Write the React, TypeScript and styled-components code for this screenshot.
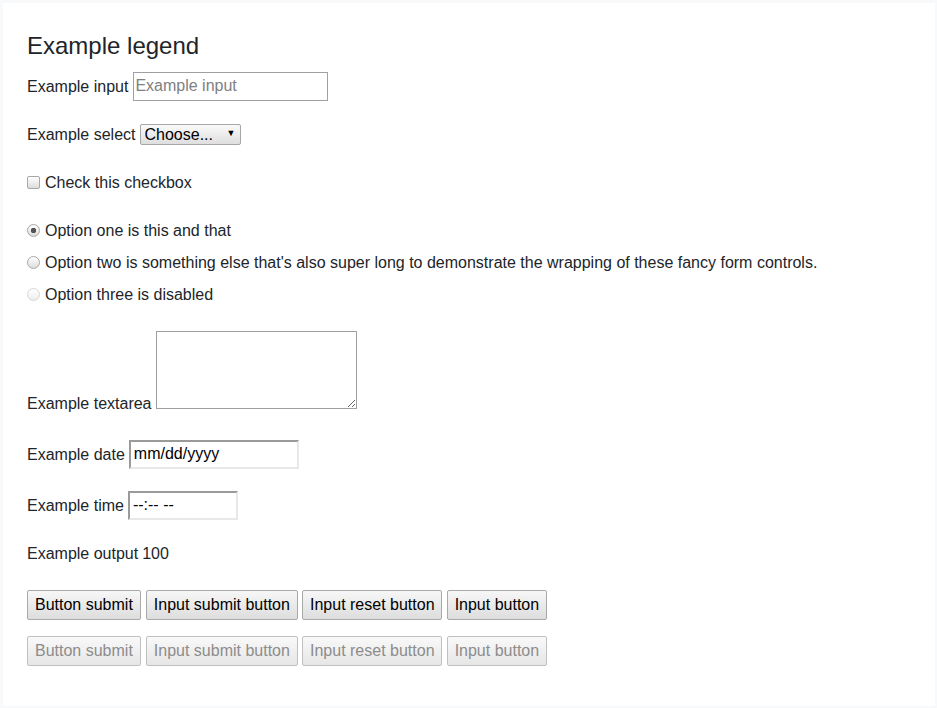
import React from "react";
import styled, { createGlobalStyle } from "styled-components";

const GlobalStyle = createGlobalStyle`
  html, body {
    margin: 0;
    padding: 0;
    background: #f8f9fa;
  }
  body {
    font-family: "Liberation Sans", Arial, sans-serif;
    font-size: 16px;
    color: #212529;
  }
  * {
    box-sizing: border-box;
  }
`;

export default function App() {
  return (
    <>
      <GlobalStyle />
      <StPage>
        <StCard>
          <StLegend>Example legend</StLegend>

          <StRow $mt={9}>
            <StLabel htmlFor="exampleInput">Example input</StLabel>
            <StTextInput id="exampleInput" placeholder="Example input" />
          </StRow>

          <StRow $mt={16}>
            <StLabel htmlFor="exampleSelect">Example select</StLabel>
            <StSelectWrap>
              <StSelect id="exampleSelect" defaultValue="">
                <option value="">Choose...</option>
                <option value="1">One</option>
                <option value="2">Two</option>
                <option value="3">Three</option>
              </StSelect>
              <StSelectArrow>▼</StSelectArrow>
            </StSelectWrap>
          </StRow>

          <StRow $mt={16}>
            <StCheckLabel>
              <StCheckbox type="checkbox" />
              Check this checkbox
            </StCheckLabel>
          </StRow>

          <StRow $mt={16}>
            <StCheckLabel>
              <StRadio type="radio" name="radios" defaultChecked />
              Option one is this and that
            </StCheckLabel>
          </StRow>
          <StRow $mt={0}>
            <StCheckLabel>
              <StRadio type="radio" name="radios" />
              Option two is something else that's also super long to
              demonstrate the wrapping of these fancy form controls.
            </StCheckLabel>
          </StRow>
          <StRow $mt={0}>
            <StCheckLabel>
              <StRadio type="radio" name="radios" disabled />
              Option three is disabled
            </StCheckLabel>
          </StRow>

          <StTextareaRow>
            <StLabel htmlFor="exampleTextarea">Example textarea</StLabel>
            <StTextarea id="exampleTextarea" />
          </StTextareaRow>

          <StRow $mt={25}>
            <StLabel htmlFor="exampleDate">Example date</StLabel>
            <StInsetInput
              id="exampleDate"
              $width={170}
              readOnly
              value="mm/dd/yyyy"
            />
          </StRow>

          <StRow $mt={19}>
            <StLabel htmlFor="exampleTime">Example time</StLabel>
            <StInsetInput
              id="exampleTime"
              $width={110}
              readOnly
              value="--:-- --"
            />
          </StRow>

          <StRow $mt={16}>
            <StLabel as="span">Example output</StLabel>
            <StOutput>100</StOutput>
          </StRow>

          <StButtonRow $mt={21}>
            <StButton type="submit">Button submit</StButton>
            <StInputButton type="submit" value="Input submit button" />
            <StInputButton type="reset" value="Input reset button" />
            <StInputButton type="button" value="Input button" />
          </StButtonRow>

          <StButtonRow $mt={16}>
            <StButton type="submit" disabled>
              Button submit
            </StButton>
            <StInputButton type="submit" value="Input submit button" disabled />
            <StInputButton type="reset" value="Input reset button" disabled />
            <StInputButton type="button" value="Input button" disabled />
          </StButtonRow>
        </StCard>
      </StPage>
    </>
  );
}

const StPage = styled.div`
  padding: 3px 2px 2px 3px;
  min-height: 708px;
`;

const StCard = styled.form`
  background: #ffffff;
  width: 932px;
  height: 703px;
  padding: 28px 24px 0 24px;
  display: flex;
  flex-direction: column;
`;

const StLegend = styled.div`
  font-size: 24px;
  line-height: 30px;
  height: 30px;
  color: #212529;
`;

const StRow = styled.div<{ $mt: number }>`
  display: flex;
  align-items: center;
  gap: 4px;
  height: 32px;
  margin-top: ${(p) => p.$mt}px;
`;

const StTextareaRow = styled.div`
  display: flex;
  align-items: flex-end;
  gap: 4px;
  margin-top: 21px;
`;

const StLabel = styled.label`
  padding-top: 2px;
  font-size: 16px;
  line-height: 18px;
  color: #212529;
  white-space: nowrap;
`;

const StTextInput = styled.input`
  width: 195px;
  height: 29px;
  margin-left: 1px;
  border: 1px solid #a0a0a0;
  border-radius: 0;
  padding: 0 1px;
  font-family: "Liberation Sans", Arial, sans-serif;
  font-size: 16px;
  color: #000;
  outline: none;

  &::placeholder {
    color: #808080;
  }
`;

const StSelectWrap = styled.div`
  position: relative;
  display: inline-flex;
`;

const StSelect = styled.select`
  appearance: none;
  width: 101px;
  height: 21px;
  border: 1px solid #a6a6a6;
  border-radius: 2px;
  background: linear-gradient(#fafafa, #dedede);
  padding: 0 0 0 4px;
  font-family: "Liberation Sans", Arial, sans-serif;
  font-size: 16px;
  line-height: 19px;
  color: #000;
  outline: none;
`;

const StSelectArrow = styled.span`
  position: absolute;
  right: 5px;
  top: 3px;
  font-size: 9px;
  line-height: 12px;
  color: #000;
  pointer-events: none;
`;

const StCheckLabel = styled.label`
  display: flex;
  align-items: center;
  gap: 5px;
  padding-top: 2px;
  font-size: 16px;
  line-height: 18px;
  color: #212529;
  white-space: nowrap;
`;

const StCheckbox = styled.input`
  appearance: none;
  margin: 0 0 2px 0;
  width: 13px;
  height: 13px;
  border: 1px solid #a8a8a8;
  border-radius: 2px;
  background: linear-gradient(#ffffff, #dcdcdc);
`;

const StRadio = styled.input`
  appearance: none;
  margin: 0 0 2px 0;
  width: 13px;
  height: 13px;
  border: 1px solid #a8a8a8;
  border-radius: 50%;
  background: linear-gradient(#ffffff, #dcdcdc);

  &:checked {
    background: radial-gradient(circle, #555 0 2.5px, transparent 3px),
      linear-gradient(#ffffff, #dcdcdc);
  }

  &:disabled {
    border-color: #d6d6d6;
    background: linear-gradient(#ffffff, #ededed);
  }
`;

const StTextarea = styled.textarea`
  width: 201px;
  height: 78px;
  margin-bottom: 4px;
  border: 1px solid #a0a0a0;
  border-radius: 0;
  padding: 2px;
  font-family: "Liberation Mono", monospace;
  font-size: 13px;
  outline: none;
`;

const StInsetInput = styled.input<{ $width: number }>`
  width: ${(p) => p.$width}px;
  height: 29px;
  border-style: solid;
  border-width: 2px;
  border-color: #9a9a9a #e8e8e8 #e8e8e8 #9a9a9a;
  border-radius: 0;
  padding: 0 3px;
  font-family: "Liberation Sans", Arial, sans-serif;
  font-size: 16px;
  color: #000;
  outline: none;
`;

const StOutput = styled.output`
  padding-top: 2px;
  font-size: 16px;
  line-height: 18px;
  color: #212529;
`;

const StButtonRow = styled.div<{ $mt: number }>`
  display: flex;
  align-items: center;
  gap: 4.5px;
  height: 30px;
  margin-top: ${(p) => p.$mt}px;
`;

const StButton = styled.button`
  height: 30px;
  padding: 0 7px;
  margin-right: 0.7px;
  border: 1px solid #a9a9a9;
  border-radius: 2px;
  background: linear-gradient(#f7f7f7, #dddddd);
  font-family: "Liberation Sans", Arial, sans-serif;
  font-size: 16px;
  color: #000;
  cursor: pointer;

  &:disabled {
    color: #8c8c8c;
    border-color: #c0c0c0;
    background: linear-gradient(#f9f9f9, #e6e6e6);
    cursor: default;
  }
`;

const StInputButton = styled(StButton).attrs({ as: "input" })`
  padding: 0 6.8px;
  margin-right: 0;
`;
